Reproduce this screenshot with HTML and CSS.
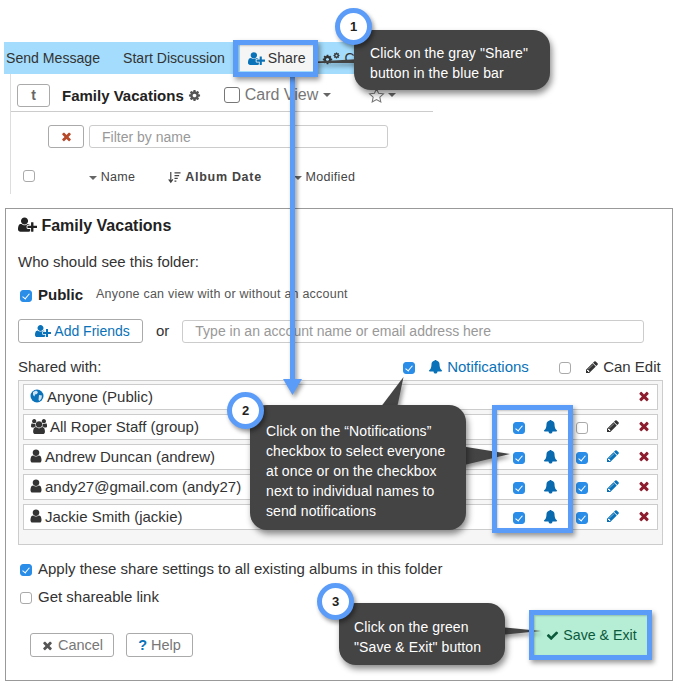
FILE: index.html
```html
<!DOCTYPE html>
<html lang="en">

<head>
    <meta charset="UTF-8">
    <title>Share folder</title>
    <link rel="stylesheet" href="styles.css">
</head>

<body>
    <svg class="sprite" width="0" height="0">
        <symbol id="i-bell" viewBox="0 0 1792 1792"><path d="M1664 1344q0 52-38 90t-90 38h-448q0 106-75 181t-181 75-180.500-75-75.500-181h-448q-52 0-90-38t-38-90q50-42 91-88t85-119.500 74.500-158.500 50-206 19.500-260q0-152 117-282.500t307-158.500q-8-19-8-39 0-40 28-68t68-28 68 28 28 68q0 20-8 39 190 28 307 158.500t117 282.500q0 139 19.500 260t50 206 74.500 158.500 85 119.500 91 88z"/></symbol>
        <symbol id="i-pencil" viewBox="0 0 1792 1792"><path d="M491 1536l91-91-235-235-91 91v107h128v128h107zm523-928q0-22-22-22-10 0-17 7l-542 542q-7 7-7 17 0 22 22 22 10 0 17-7l542-542q7-7 7-17zm-54-192l416 416-832 832h-416v-416zm683 96q0 53-37 90l-166 166-416-416 166-165q36-38 90-38 53 0 91 38l235 234q37 39 37 91z"/></symbol>
        <symbol id="i-x" viewBox="0 0 1792 1792"><path d="M1490 1322q0 40-28 68l-136 136q-28 28-68 28t-68-28l-294-294-294 294q-28 28-68 28t-68-28l-136-136q-28-28-28-68t28-68l294-294-294-294q-28-28-28-68t28-68l136-136q28-28 68-28t68 28l294 294 294-294q28-28 68-28t68 28l136 136q28 28 28 68t-28 68l-294 294 294 294q28 28 28 68z"/></symbol>
        <symbol id="i-check" viewBox="0 0 1792 1792"><path d="M1671 566q0 40-28 68l-724 724-136 136q-28 28-68 28t-68-28l-136-136-362-362q-28-28-28-68t28-68l136-136q28-28 68-28t68 28l294 295 656-657q28-28 68-28t68 28l136 136q28 28 28 68z"/></symbol>
        <symbol id="i-user" viewBox="200 128 1392 1536"><path d="M1536 1399q0 109-62.500 187t-150.500 78h-854q-88 0-150.500-78t-62.500-187q0-85 8.500-160.500t31.500-152 58.500-131 94-89 134.500-34.500q131 128 313 128t313-128q76 0 134.500 34.500t94 89 58.500 131 31.500 152 8.500 160.500zm-256-887q0 159-112.500 271.500t-271.500 112.500-271.500-112.500-112.500-271.500 112.500-271.500 271.500-112.500 271.500 112.500 112.500 271.500z"/></symbol>
        <symbol id="i-user-plus" viewBox="0 0 2048 1792"><path d="M704 896q-159 0-271.500-112.500t-112.500-271.500 112.500-271.500 271.500-112.500 271.500 112.500 112.500 271.500-112.500 271.500-271.500 112.500zm960 128h352q13 0 22.500 9.500t9.500 22.500v192q0 13-9.500 22.500t-22.500 9.500h-352v352q0 13-9.500 22.500t-22.500 9.500h-192q-13 0-22.500-9.500t-9.500-22.500v-352h-352q-13 0-22.500-9.500t-9.500-22.500v-192q0-13 9.500-22.500t22.500-9.500h352v-352q0-13 9.500-22.500t22.500-9.500h192q13 0 22.500 9.500t9.500 22.500v352zm-736 224q0 52 38 90t90 38h256v238q-68 50-171 50h-874q-121 0-194-69t-73-190q0-53 3.500-103.500t14-109 26.500-108.500 43-97.500 62-81 85.500-53.500 111.500-20q19 0 39 17 79 61 154.500 91.500t164.500 30.500 164.500-30.500 154.500-91.500q20-17 39-17 132 0 217 96h-223q-52 0-90 38t-38 90v192z"/></symbol>
        <symbol id="i-users" viewBox="0 0 1920 1792"><path d="M657 896q-162 5-265 128h-134q-82 0-138-40.500t-56-118.500q0-353 124-353 6 0 43.500 21t97.500 42.500 119 21.500q67 0 133-23-5 37-5 66 0 139 81 256zm1071 637q0 120-73 189.500t-194 69.500h-874q-121 0-194-69.500t-73-189.500q0-53 3.500-103.500t14-109 26.500-108.500 43-97.500 62-81 85.500-53.500 111.500-20q10 0 43 21.500t73 48 107 48 135 21.500 135-21.500 107-48 73-48 43-21.500q61 0 111.500 20t85.500 53.500 62 81 43 97.500 26.500 108.500 14 109 3.500 103.500zm-1024-1277q0 106-75 181t-181 75-181-75-75-181 75-181 181-75 181 75 75 181zm704 384q0 159-112.500 271.500t-271.500 112.500-271.500-112.500-112.500-271.500 112.500-271.500 271.500-112.500 271.500 112.500 112.500 271.500zm576 225q0 78-56 118.500t-138 40.500h-134q-103-123-265-128 81-117 81-256 0-29-5-66 66 23 133 23 59 0 119-21.500t97.500-42.500 43.500-21q124 0 124 353zm-128-609q0 106-75 181t-181 75-181-75-75-181 75-181 181-75 181 75 75 181z"/></symbol>
        <symbol id="i-gear" viewBox="0 0 1792 1792"><path d="M1152 896q0-106-75-181t-181-75-181 75-75 181 75 181 181 75 181-75 75-181zm512-109v222q0 12-8 23t-20 13l-185 28q-19 54-39 91 35 50 107 138 10 12 10 25t-9 23q-27 37-99 108t-94 71q-12 0-26-9l-138-108q-44 23-91 38-16 136-29 186-7 28-36 28h-222q-14 0-24.500-8.500t-11.500-21.500l-28-184q-49-16-90-37l-141 107q-10 9-25 9-14 0-25-11-126-114-165-168-7-10-7-23 0-12 8-23 15-21 51-66.500t54-70.500q-27-50-41-99l-183-27q-13-2-21-12.500t-8-23.500v-222q0-12 8-23t19-13l186-28q14-46 39-92-40-57-107-138-10-12-10-24 0-10 9-23 26-36 98.500-107.500t94.500-71.500q13 0 26 10l138 107q44-23 91-38 16-136 29-186 7-28 36-28h222q14 0 24.500 8.500t11.500 21.500l28 184q49 16 90 37l142-107q9-9 24-9 13 0 25 10 129 119 165 170 7 8 7 22 0 12-8 23-15 21-51 66.500t-54 70.500q26 50 41 98l183 28q13 2 21 12.500t8 23.500z"/></symbol>
    </svg>

    <div class="page">
        <header class="top">
            <nav class="bar">
                <span>Send Message</span>
                <span>Start Discussion</span>
                <span class="share"><svg class="ic ic-wide blue"><use href="#i-user-plus"/></svg> Share</span>
                <span class="customize"><svg class="ic-small"><use href="#i-gear"/></svg><svg class="ic-tiny"><use href="#i-gear"/></svg> Cu</span>
            </nav>
            <div class="folder">
                <div class="folder-head">
                    <span class="btn-t">t</span>
                    <b class="folder-name">Family Vacations</b>
                    <svg class="ic gray"><use href="#i-gear"/></svg>
                    <span class="big-check"></span>
                    <span class="card-view">Card View</span>
                    <span class="caret caret-big"></span>
                    <svg class="star" viewBox="0 0 20 20"><path d="M10 2l2.400 5.400 5.800.6-4.300 3.900 1.200 5.800-5.100-3-5.100 3 1.200-5.800L1.800 8l5.800-.6z"/></svg>
                    <span class="caret"></span>
                </div>
                <div class="filter">
                    <span class="btn-clear"><svg class="ic rust"><use href="#i-x"/></svg></span>
                    <span class="filter-input">Filter by name</span>
                </div>
                <div class="cols">
                    <span class="cb cb-col"></span>
                    <span class="col col-name"><span class="caret"></span> Name</span>
                    <span class="col col-date">
                        <svg class="sort" viewBox="0 0 14 14"><path d="M3 1v10M.8 9L3 12l2.200-3M7 2h6.500M7 5h5M7 8h3.500M7 11h2" /></svg>
                        <b>Album Date</b>
                    </span>
                    <span class="col col-mod"><span class="caret"></span> Modified</span>
                </div>
            </div>
        </header>

        <main class="panel">
            <h2 class="panel-title"><svg class="ic-title"><use href="#i-user-plus"/></svg> Family Vacations</h2>
            <p class="who">Who should see this folder:</p>
            <div class="public">
                <span class="cb on"></span>
                <b>Public</b>
                <small>Anyone can view with or without an account</small>
            </div>
            <div class="add">
                <span class="btn btn-add"><svg class="ic ic-add blue"><use href="#i-user-plus"/></svg> Add Friends</span>
                <span class="or">or</span>
                <span class="add-input">Type in an account name or email address here</span>
            </div>
            <div class="shared-head">
                <span class="shared-label">Shared with:</span>
                <span class="cb on"></span>
                <span class="notif"><svg class="ic-14"><use href="#i-bell"/></svg> Notifications</span>
                <span class="cb"></span>
                <span class="can-edit"><svg class="ic-14"><use href="#i-pencil"/></svg> Can Edit</span>
            </div>
            <ul class="shared">
                <li class="row">
                    <span class="who-name">
                        <svg class="ic-14" viewBox="0 0 14 14"><circle cx="7" cy="7" r="6.500" fill="#0a72b8"/><path d="M3 3l3-1.500 2 1.500-1 2-2 .5-.5 2L3 6zM9 6l3 .5-.5 3-2 2.500-1-1z" fill="#cfe3f2"/></svg>
                        Anyone (Public)
                    </span>
                    <svg class="del"><use href="#i-x"/></svg>
                </li>
                <li class="row">
                    <span class="who-name"><svg class="ic-group"><use href="#i-users"/></svg> All Roper Staff (group)</span>
                    <span class="cb on c1"></span>
                    <svg class="ic-14 bell"><use href="#i-bell"/></svg>
                    <span class="cb c2"></span>
                    <svg class="ic-14 pen"><use href="#i-pencil"/></svg>
                    <svg class="del"><use href="#i-x"/></svg>
                </li>
                <li class="row">
                    <span class="who-name"><svg class="ic-user"><use href="#i-user"/></svg> Andrew Duncan (andrew)</span>
                    <span class="cb on c1"></span>
                    <svg class="ic-14 bell"><use href="#i-bell"/></svg>
                    <span class="cb on c2"></span>
                    <svg class="ic-14 pen blue"><use href="#i-pencil"/></svg>
                    <svg class="del"><use href="#i-x"/></svg>
                </li>
                <li class="row">
                    <span class="who-name"><svg class="ic-user"><use href="#i-user"/></svg> andy27@gmail.com (andy27)</span>
                    <span class="cb on c1"></span>
                    <svg class="ic-14 bell"><use href="#i-bell"/></svg>
                    <span class="cb on c2"></span>
                    <svg class="ic-14 pen blue"><use href="#i-pencil"/></svg>
                    <svg class="del"><use href="#i-x"/></svg>
                </li>
                <li class="row">
                    <span class="who-name"><svg class="ic-user"><use href="#i-user"/></svg> Jackie Smith (jackie)</span>
                    <span class="cb on c1"></span>
                    <svg class="ic-14 bell"><use href="#i-bell"/></svg>
                    <span class="cb on c2"></span>
                    <svg class="ic-14 pen blue"><use href="#i-pencil"/></svg>
                    <svg class="del"><use href="#i-x"/></svg>
                </li>
            </ul>
            <label class="opt opt-apply"><span class="cb on"></span> Apply these share settings to all existing albums in this folder</label>
            <label class="opt opt-link"><span class="cb"></span> Get shareable link</label>
            <footer class="actions">
                <span class="btn btn-cancel"><svg class="ic gray"><use href="#i-x"/></svg> Cancel</span>
                <span class="btn btn-help"><b>?</b> Help</span>
                <span class="btn-save"><svg class="ic-13"><use href="#i-check"/></svg> Save &amp; Exit</span>
            </footer>
        </main>

        <!-- annotations drawn over the screenshot -->
        <svg class="marks" viewBox="0 0 682 685">
            <g class="shadowed">
                <path class="tail" d="M360 59L316 61.500 316 63 360 63z"/>
                <path class="tail" d="M380 408L397 408 403.500 377z"/>
                <path class="tail" d="M460 446L510 454 460 466z"/>
                <path class="tail" d="M500 627L541 631 500 635z"/>
                <path class="arrow" d="M290 76h5v303h7l-9.500 16-9.500-16h7z"/>
            </g>
        </svg>
        <div class="hl hl-share"></div>
        <div class="hl hl-bells"></div>
        <div class="hl hl-save"></div>

        <div class="tip tip-1">Click on the gray "Share"<br>button in the blue bar</div>
        <div class="tip tip-2">Click on the “Notifications”<br>checkbox to select everyone<br>at once or on the checkbox<br>next to individual names to<br>send notifications</div>
        <div class="tip tip-3">Click on the green<br>"Save &amp; Exit" button</div>
        <span class="num num-1">1</span>
        <span class="num num-2">2</span>
        <span class="num num-3">3</span>
    </div>
</body>

</html>
```

FILE: styles.css
```css
html, body {
    margin: 0;
    padding: 0;
    background: #fff;
}

body {
    font-family: "Liberation Sans", Arial, sans-serif;
    font-size: 15px;
    color: #333;
}

.sprite {
    position: absolute;
}

.page {
    position: relative;
    width: 682px;
    height: 685px;
    overflow: hidden;
}

svg {
    fill: currentColor;
    flex: none;
}

.ic { width: 13px; height: 13px; vertical-align: -2px; }
.ic-wide { width: 17px; height: 15px; }
.ic-add { width: 16px; height: 14px; }
.ic-small { width: 11px; height: 11px; vertical-align: -2px; }
.ic-tiny { width: 7px; height: 7px; vertical-align: 4px; }
.ic-13 { width: 13px; height: 13px; vertical-align: -2px; }
.ic-14 { width: 14px; height: 14px; vertical-align: -2px; }
.ic-user { width: 12px; height: 14px; }
.ic-group { width: 17px; height: 15px; vertical-align: -2px; }
.ic-title { width: 19px; height: 17px; vertical-align: -2px; }
.blue { color: #0a72b8; }
.gray { color: #555; }
.rust { color: #b5492a; }

.caret {
    display: inline-block;
    width: 0;
    height: 0;
    border-left: 4px solid transparent;
    border-right: 4px solid transparent;
    border-top: 4px solid #666;
    vertical-align: middle;
}

/* top strip */
.top {
    height: 208px;
    padding-top: 42px;
    box-sizing: border-box;
}

.bar {
    display: flex;
    align-items: center;
    width: 356px;
    height: 32px;
    margin-left: 4px;
    padding-left: 2px;
    box-sizing: border-box;
    background: #a3dcfc;
    font-size: 14.1px;
    white-space: nowrap;
}

.bar span:nth-child(2) {
    margin-left: 23px;
}

.share {
    display: flex;
    align-items: center;
    gap: 3px;
    height: 26px;
    margin-left: 15px;
    padding: 0 8px;
    background: #f5f5f5;
}

.customize {
    margin-left: 9px;
}

.folder {
    height: 120px;
    margin-left: 10px;
    border-left: 1px solid #ddd;
}

.folder-head {
    display: flex;
    align-items: center;
    width: 422px;
    height: 38px;
    padding: 5px 0 0 6px;
    box-sizing: border-box;
    border-bottom: 1px solid #ccc;
}

.btn-t {
    width: 33px;
    height: 23px;
    box-sizing: border-box;
    border: 1px solid #aaa;
    border-radius: 3px;
    color: #666;
    font-size: 14px;
    font-weight: bold;
    line-height: 21px;
    text-align: center;
}

.folder-name {
    margin: 0 4px 0 12px;
    font-size: 15px;
    color: #222;
}

.big-check {
    width: 16px;
    height: 16px;
    margin: 0 5px 0 23px;
    box-sizing: border-box;
    border: 1px solid #777;
    border-radius: 3px;
}

.card-view {
    margin-right: 5px;
    font-size: 16px;
    color: #777;
}

.star {
    width: 17px;
    height: 17px;
    margin: 0 3px 0 37px;
    fill: none;
    stroke: #777;
    stroke-width: 1.2;
}

.filter {
    display: flex;
    gap: 5px;
    margin: 13px 0 0 37px;
}

.btn-clear {
    display: flex;
    align-items: center;
    justify-content: center;
    width: 36px;
    height: 23px;
    box-sizing: border-box;
    border: 1px solid #aaa;
    border-radius: 3px;
}

.filter-input {
    width: 299px;
    height: 23px;
    padding-left: 12px;
    box-sizing: border-box;
    border: 1px solid #ccc;
    border-radius: 3px;
    color: #999;
    font-size: 14px;
    line-height: 23px;
}

.cols {
    display: flex;
    align-items: center;
    height: 14px;
    margin: 22px 0 0 12px;
    font-size: 12.5px;
    letter-spacing: .3px;
    color: #444;
}

.cb.cb-col {
    margin: 0 54px 2px 0;
}

.col-date {
    display: flex;
    align-items: center;
    gap: 4px;
    margin-left: 33px;
}

.col-date b {
    letter-spacing: .7px;
}

.sort {
    width: 13px;
    height: 13px;
    fill: none;
    stroke: #444;
    stroke-width: 1.3;
}

.col-mod {
    margin-left: 32px;
}

/* share panel */
.panel {
    width: 668px;
    height: 473px;
    margin-left: 5px;
    padding: 7px 9px 0 12px;
    box-sizing: border-box;
    border: 1px solid #999;
}

.panel-title {
    height: 20px;
    margin: 0;
    font-size: 16px;
    line-height: 20px;
    color: #222;
}

.who {
    height: 20px;
    margin: 16px 0 0;
    line-height: 20px;
}

.public {
    display: flex;
    align-items: center;
    height: 18px;
    margin: 13px 0 0 2px;
    padding-bottom: 2px;
}

.public b {
    margin-left: 6px;
    color: #222;
}

.public small {
    margin-left: 13px;
    font-size: 12.5px;
    letter-spacing: .22px;
    color: #555;
}

.add {
    display: flex;
    align-items: center;
    height: 24px;
    margin-top: 14px;
}

.btn {
    display: block;
    height: 24px;
    box-sizing: border-box;
    border: 1px solid #aaa;
    border-radius: 3px;
    font-size: 14.5px;
    line-height: 22px;
    text-align: center;
    color: #777;
}

.btn-add {
    width: 125px;
    padding-left: 4px;
    font-size: 14px;
    color: #0a72b8;
}

.or {
    margin: -2px 13px 0;
}

.add-input {
    width: 462px;
    height: 23px;
    padding-left: 12px;
    box-sizing: border-box;
    border: 1px solid #ccc;
    border-radius: 3px;
    color: #999;
    font-size: 14px;
    line-height: 21px;
}

.shared-head {
    display: flex;
    align-items: center;
    height: 18px;
    margin-top: 14px;
    padding-bottom: 2px;
}

.shared-label {
    width: 385px;
}

.notif {
    width: 130px;
    margin-left: 14px;
    color: #0a72b8;
}

.can-edit {
    margin-left: 14px;
}

.shared {
    display: flex;
    flex-direction: column;
    gap: 4px;
    height: 165px;
    margin: 3px 0 0;
    padding: 3px 4px 0;
    box-sizing: border-box;
    border: 1px solid #ccc;
    background: #f6f6f6;
    list-style: none;
}

.row {
    display: flex;
    align-items: center;
    height: 26px;
    padding: 0 6px 2px;
    box-sizing: border-box;
    border: 1px solid #ccc;
    background: #fff;
}

.who-name {
    display: flex;
    align-items: center;
    gap: 3px;
    width: 484px;
    margin-right: auto;
}

.c1 { margin-right: 19px; }
.bell { margin: 2px 18px 0 0; color: #0a6ab0; }
.c2 { margin-right: 18px; }
.pen { margin-right: 17px; }
.del { width: 14px; height: 14px; color: #8c1c2e; }

.row:first-child .del {
    margin-left: auto;
}

.cb {
    display: inline-block;
    position: relative;
    flex: none;
    width: 12px;
    height: 12px;
    margin-top: 4px;
    box-sizing: border-box;
    border: 1px solid #aaa;
    border-radius: 3px;
    background: #fff;
}

.cb.on {
    border-color: #2a8de8;
    background: #2a8de8;
}

.cb.on::after {
    content: "";
    position: absolute;
    left: 3px;
    top: 1px;
    width: 3px;
    height: 6px;
    border: solid #fff;
    border-width: 0 1.5px 1.5px 0;
    transform: rotate(40deg);
}

.opt {
    display: flex;
    align-items: center;
    gap: 6px;
    height: 18px;
    padding: 0 0 2px 2px;
}

.opt-apply { margin-top: 14px; }
.opt-link { margin-top: 8px; }

.actions {
    display: flex;
    align-items: flex-start;
    margin: 7px 14px 0 12px;
}

.btn-cancel {
    width: 84px;
    margin-top: 19px;
}

.btn-help {
    width: 67px;
    margin: 19px 0 0 12px;
}

.btn-help b {
    color: #0a72b8;
}

.btn-save {
    width: 115px;
    height: 42px;
    margin-left: auto;
    background: #b5edd5;
    color: #0b5a3c;
    font-size: 14.2px;
    line-height: 42px;
    text-align: center;
}

/* annotations */
.marks {
    position: absolute;
    left: 0;
    top: 0;
    width: 682px;
    height: 685px;
}

.shadowed {
    filter: drop-shadow(2px 3px 2px rgba(0, 0, 0, .4));
}

.tail { fill: #444; }
.arrow { fill: #5b9cf9; }

.hl {
    position: absolute;
    box-sizing: border-box;
    border: 5px solid #5b9cf9;
    box-shadow: 2px 3px 5px rgba(0, 0, 0, .4), inset 1px 1px 2px rgba(0, 0, 0, .2);
}

.hl-share { left: 233px; top: 40px; width: 85px; height: 37px; }
.hl-bells { left: 492px; top: 405px; width: 81px; height: 128px; }
.hl-save { left: 529px; top: 610px; width: 123px; height: 50px; }

.tip {
    position: absolute;
    box-sizing: border-box;
    border-radius: 17px;
    background: #444;
    box-shadow: 2px 4px 6px rgba(0, 0, 0, .45);
    color: #fff;
    font-size: 14px;
    letter-spacing: .1px;
    line-height: 20px;
}

.tip-1 { left: 354px; top: 30px; width: 196px; height: 60px; padding: 13px 16px; }
.tip-2 { left: 250px; top: 405px; width: 216px; height: 125px; padding: 16px 16px; }
.tip-3 { left: 339px; top: 603px; width: 166px; height: 62px; padding: 14px 15px; }

.num {
    position: absolute;
    width: 37px;
    height: 37px;
    box-sizing: border-box;
    border: 5px solid #5b9cf9;
    border-radius: 50%;
    background: #fff;
    box-shadow: 2px 3px 4px rgba(0, 0, 0, .4);
    color: #222;
    font-size: 13px;
    font-weight: bold;
    line-height: 27px;
    text-align: center;
}

.num-1 { left: 335px; top: 8px; }
.num-2 { left: 227px; top: 392px; }
.num-3 { left: 317px; top: 583px; }
```
